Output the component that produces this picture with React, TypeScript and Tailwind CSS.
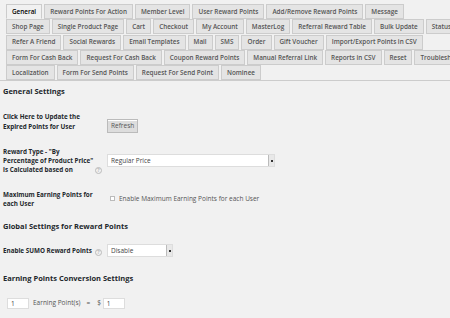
const tabRows: string[][] = [
  ['General', 'Reward Points For Action', 'Member Level', 'User Reward Points', 'Add/Remove Reward Points', 'Message'],
  ['Shop Page', 'Single Product Page', 'Cart', 'Checkout', 'My Account', 'MasterLog', 'Referral Reward Table', 'Bulk Update', 'Status'],
  ['Refer A Friend', 'Social Rewards', 'Email Templates', 'Mail', 'SMS', 'Order', 'Gift Voucher', 'Import/Export Points in CSV'],
  ['Form For Cash Back', 'Request For Cash Back', 'Coupon Reward Points', 'Manual Referral Link', 'Reports in CSV', 'Reset', 'Troubleshoot'],
  ['Localization', 'Form For Send Points', 'Request For Send Point', 'Nominee'],
];

function HelpIcon() {
  return (
    <span className="w-[7px] h-[7px] rounded-full border border-[#bbb] text-[#bbb] text-[5px] leading-[5px] flex items-center justify-center font-bold">
      ?
    </span>
  );
}

function SelectBox({ value, width }: { value: string; width: string }) {
  return (
    <div className={`${width} h-[13px] bg-white border border-[#ddd] flex items-center justify-between pl-[3px]`}>
      <span className="text-[6.5px] text-[#444]">{value}</span>
      <span className="w-[6px] h-[11px] bg-[#e8e8e8] border-l border-[#bbb] flex items-center justify-center">
        <span className="block w-[2px] h-[2px] bg-[#333]" />
      </span>
    </div>
  );
}

function Row({ label, help, children }: { label: React.ReactNode; help?: boolean; children: React.ReactNode }) {
  return (
    <div className="flex items-center">
      <div className="w-[92px] whitespace-nowrap text-[6.3px] font-bold leading-[9.3px] text-[#23282d]">{label}</div>
      <div className="w-[12px] flex justify-start self-end pb-[1px]">{help && <HelpIcon />}</div>
      <div>{children}</div>
    </div>
  );
}

export default function App() {
  return (
    <div
      className="w-[450px] h-[318px] overflow-hidden bg-[#f1f1f1] text-[#444]"
      style={{ fontFamily: '"Open Sans", "Liberation Sans", sans-serif' }}
    >
      {/* Tabs */}
      <div className="pl-[6px] pt-[4px] border-b border-[#ccc]">
        {tabRows.map((row, i) => (
          <div key={i} className="flex whitespace-nowrap">
            {row.map((tab) => (
              <div
                key={tab}
                className={`mr-[2px] mb-[0.3px] h-[15px] px-[5px] flex items-center border border-[#ccc] text-[6.35px] font-semibold ${
                  tab === 'General' ? 'bg-[#f1f1f1] text-[#000] border-b-[#f1f1f1]' : 'bg-[#e4e4e4] text-[#555]'
                }`}
              >
                {tab}
              </div>
            ))}
          </div>
        ))}
      </div>

      <div className="pl-[3px]">
        <h2 className="text-[7.5px] font-bold text-[#23282d] mt-[5px] mb-[12px]">General Settings</h2>

        <Row label={<>Click Here to Update the<br />Expired Points for User</>}>
          <button className="h-[14px] px-[3px] bg-[#ddd] border border-[#bbb] text-[6.5px] text-[#555] shadow-[inset_0_1px_0_#fff]">
            Refresh
          </button>
        </Row>

        <div className="h-[13px]" />
        <Row help label={<>Reward Type - "By<br />Percentage of Product Price"<br />is Calculated based on</>}>
          <SelectBox value="Regular Price" width="w-[168px]" />
        </Row>

        <div className="h-[15px]" />
        <Row label={<>Maximum Earning Points for<br />each User</>}>
          <label className="flex items-center gap-[4px] text-[6.5px] text-[#555] pl-[3px]">
            <span className="w-[5px] h-[5px] border border-[#bbb] bg-white" />
            Enable Maximum Earning Points for each User
          </label>
        </Row>

        <h2 className="text-[7.5px] font-bold text-[#23282d] mt-[13px] mb-[12px]">Global Settings for Reward Points</h2>

        <Row help label="Enable SUMO Reward Points">
          <SelectBox value="Disable" width="w-[66px]" />
        </Row>

        <h2 className="text-[7.5px] font-bold text-[#23282d] mt-[16px] mb-[13px]">Earning Points Conversion Settings</h2>

        <div className="flex items-center text-[6.5px] text-[#555] pl-[4px]">
          <span className="w-[22px] h-[11px] bg-white border border-[#ddd] pl-[3px] leading-[9px] text-[#444]">1</span>
          <span className="ml-[4px]">Earning Point(s)</span>
          <span className="ml-[6px]">=</span>
          <span className="ml-[7px]">$</span>
          <span className="ml-[2px] w-[22px] h-[11px] bg-white border border-[#ddd] pl-[3px] leading-[9px] text-[#444]">1</span>
        </div>
      </div>
    </div>
  );
}
